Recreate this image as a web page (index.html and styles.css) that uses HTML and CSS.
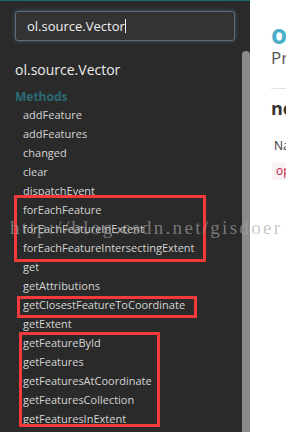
FILE: index.html
```html
<!DOCTYPE html>
<html lang="en">

<head>
    <meta charset="UTF-8">
    <meta name="viewport" content="width=device-width, initial-scale=1.0">
    <title>ol.source.Vector</title>
    <link rel="stylesheet" href="styles.css">
</head>

<body>
    <div class="page">
        <div class="sidebar">
            <div class="search-box">
                <span class="search-text">ol.source.Vector</span><span class="caret"></span>
            </div>

            <h3 class="class-name">ol.source.Vector</h3>
            <h4 class="section-title">Methods</h4>

            <ul class="member-list">
                <li>addFeature</li>
                <li>addFeatures</li>
                <li>changed</li>
                <li>clear</li>
                <li>dispatchEvent</li>
                <li>forEachFeature</li>
                <li>forEachFeatureInExtent</li>
                <li>forEachFeatureIntersectingExtent</li>
                <li>get</li>
                <li>getAttributions</li>
                <li>getClosestFeatureToCoordinate</li>
                <li>getExtent</li>
                <li>getFeatureById</li>
                <li>getFeatures</li>
                <li>getFeaturesAtCoordinate</li>
                <li>getFeaturesCollection</li>
                <li>getFeaturesInExtent</li>
            </ul>

            <div class="scroll-thumb"></div>
        </div>

        <div class="content">
            <h1 class="page-title">o</h1>
            <p class="subtitle">Pro</p>
            <hr class="divider">
            <h2 class="member-title">ne</h2>
            <p class="param-head">Na</p>
            <code class="badge">op</code>
        </div>
    </div>

    <!-- annotations drawn over the screenshot -->
    <div class="mark mark-one"></div>
    <div class="mark mark-two"></div>
    <div class="mark mark-three"></div>
    <div class="watermark">http://blog.csdn.net/gisdoer</div>
</body>

</html>
```

FILE: styles.css
```css
* {
    padding: 0;
    margin: 0;
    box-sizing: border-box;
}

body {
    width: 286px;
    height: 432px;
    overflow: hidden;
    background: #ffffff;
    font-family: "Open Sans", sans-serif;
}

.page {
    display: flex;
    height: 432px;
}

.sidebar {
    position: relative;
    width: 250px;
    flex-shrink: 0;
    background: #2a2a2a;
    border-top: 1px solid #1b6a71;
    padding: 10px 15px 0 15px;
}

.search-box {
    display: flex;
    align-items: center;
    width: 220px;
    height: 30px;
    padding-left: 11px;
    background: #333333;
    border: 1px solid #5b6e80;
    border-radius: 3px;
    box-shadow: 0 0 4px rgba(90, 130, 170, 0.6);
    color: #f0f0f0;
    font-size: 13px;
}

.caret {
    display: inline-block;
    width: 1px;
    height: 14px;
    background: #f0f0f0;
}

.class-name {
    margin-top: 19px;
    font-size: 14px;
    font-weight: 400;
    line-height: 20px;
    color: #ececec;
}

.section-title {
    margin-top: 9px;
    font-size: 12px;
    font-weight: 700;
    line-height: 16px;
    color: #2b6c76;
}

.member-list {
    list-style: none;
    padding-left: 8px;
}

.member-list li {
    font-size: 11px;
    line-height: 19px;
    color: #d4d4d4;
    white-space: nowrap;
}

.scroll-thumb {
    position: absolute;
    right: 0;
    top: 50px;
    bottom: 0;
    width: 8px;
    background: #8a8a8a;
    border-radius: 4px 4px 0 0;
}

.content {
    flex: 1;
    padding: 22px 0 0 21px;
    color: #333;
    white-space: nowrap;
}

.page-title {
    font-size: 26px;
    font-weight: 700;
    line-height: 24px;
    color: #4aaec7;
}

.subtitle {
    margin-top: 2px;
    font-size: 17px;
    line-height: 20px;
    color: #555;
}

.divider {
    margin: 20px 0 8px 0;
    border: none;
    border-top: 1px solid #e3e3e3;
}

.member-title {
    font-size: 18px;
    font-weight: 700;
    line-height: 22px;
    color: #333;
}

.param-head {
    margin-top: 20px;
    margin-left: 3px;
    font-size: 12px;
    line-height: 14px;
    color: #333;
}

.badge {
    display: inline-block;
    margin-top: 9px;
    margin-left: 1px;
    padding: 2px 4px;
    font-family: "Open Sans", sans-serif;
    font-size: 12px;
    line-height: 14px;
    color: #c7254e;
    background: #f9f2f4;
    border-radius: 4px;
}

.mark {
    position: absolute;
    border: 3px solid #f23a3a;
}

.mark-one {
    left: 14px;
    top: 195px;
    width: 192px;
    height: 67px;
}

.mark-two {
    left: 17px;
    top: 296px;
    width: 180px;
    height: 22px;
}

.mark-three {
    left: 19px;
    top: 332px;
    width: 141px;
    height: 95px;
}

.watermark {
    position: absolute;
    left: 10px;
    top: 216px;
    font-family: "Liberation Serif", serif;
    font-size: 19px;
    letter-spacing: 2.3px;
    line-height: 24px;
    color: rgba(168, 168, 168, 0.63);
    white-space: nowrap;
}
```
